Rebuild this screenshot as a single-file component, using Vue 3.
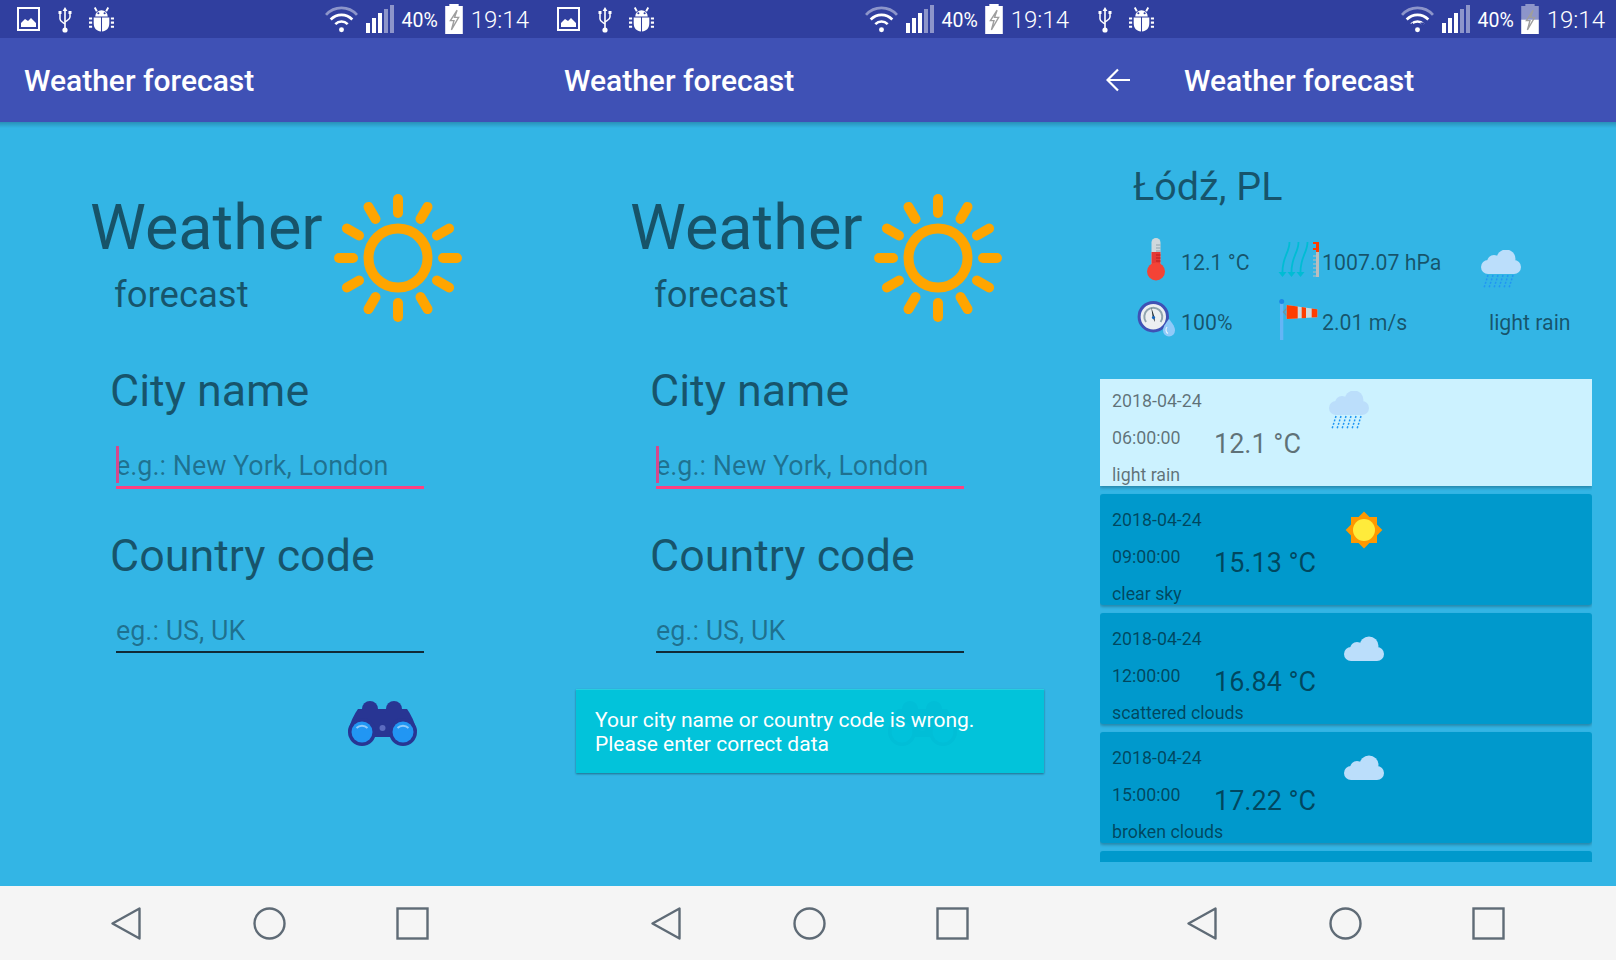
<script setup>
const phones = [
  { id: 1, screen: "form", showImage: true, toast: false },
  { id: 2, screen: "form", showImage: true, toast: true },
  { id: 3, screen: "details", showImage: false, toast: false },
];

const fields = [
  { label: "City name", placeholder: "e.g.: New York, London", active: true },
  { label: "Country code", placeholder: "eg.: US, UK", active: false },
];

const forecast = [
  { date: "2018-04-24", time: "06:00:00", temp: "12.1 °C", desc: "light rain", icon: "rain" },
  { date: "2018-04-24", time: "09:00:00", temp: "15.13 °C", desc: "clear sky", icon: "sun" },
  { date: "2018-04-24", time: "12:00:00", temp: "16.84 °C", desc: "scattered clouds", icon: "cloud" },
  { date: "2018-04-24", time: "15:00:00", temp: "17.22 °C", desc: "broken clouds", icon: "cloud" },
];

const rays = [0, 30, 60, 90, 120, 150, 180, 210, 240, 270, 300, 330];
const signal = [
  { x: 0, y: 18, h: 10, dim: false },
  { x: 6, y: 13, h: 15, dim: false },
  { x: 12, y: 8, h: 20, dim: false },
  { x: 18, y: 4, h: 24, dim: true },
  { x: 24, y: 0, h: 28, dim: true },
];
</script>

<template>
  <div class="screens">
    <svg class="defs" aria-hidden="true">
      <symbol id="cloud" viewBox="0 0 40 40">
        <g fill="#bbdefb">
          <circle cx="25" cy="17" r="9.5" />
          <circle cx="13" cy="20" r="7" />
          <rect x="0" y="18" width="40" height="14" rx="7" />
        </g>
      </symbol>
      <symbol id="rain" viewBox="0 0 40 40">
        <g fill="#bbdefb">
          <circle cx="25" cy="9" r="9.5" />
          <circle cx="13" cy="12" r="7" />
          <rect x="0" y="10" width="40" height="14" rx="7" />
        </g>
        <g stroke="#2196f3" stroke-width="1.5" stroke-dasharray="2 1.6" fill="none">
          <path d="M7 25 3 38M12 25 8 38M17 25 13 38M22 25 18 38M27 25 23 38M32 25 28 38" />
        </g>
      </symbol>
      <symbol id="sun" viewBox="0 0 40 40">
        <g fill="#ff9800">
          <rect x="7" y="7" width="26" height="26" />
          <rect x="7" y="7" width="26" height="26" transform="rotate(45 20 20)" />
        </g>
        <circle cx="20" cy="20" r="11" fill="#ffeb3b" />
      </symbol>
    </svg>

    <section v-for="phone in phones" :key="phone.id" class="phone">
      <div class="status" :class="{ 'status-short': !phone.showImage }">
        <div class="status-left">
          <svg v-if="phone.showImage" class="ic-image" viewBox="0 0 23 24">
            <path d="M1 1h21v22H1z" fill="none" stroke="#fff" stroke-width="2" />
            <path d="M4 20v-4l4-4 3 2 3-3 5 5v4z" fill="#fff" />
          </svg>
          <svg class="ic-usb" viewBox="0 0 14 27">
            <path d="M7 1 4.6 5h1.6v17h1.6V5h1.6z" fill="#fff" />
            <circle cx="7" cy="24" r="2.6" fill="#fff" />
            <path d="M2 7v6c0 2.400 2 3 5 5M12 7v4c0 2.400-2 3-5 5" fill="none" stroke="#fff" stroke-width="1.500" />
            <rect x="0.500" y="5" width="3" height="3" fill="#fff" />
            <rect x="10.500" y="5" width="3" height="3" fill="#fff" />
          </svg>
          <svg class="ic-bug" viewBox="0 0 24 24">
            <path d="M6 9a6 6 0 0 1 12 0z" fill="#fff" />
            <path d="M7.500 4 5.500 0.500M16.500 4l2-3.500" stroke="#fff" stroke-width="1.800" />
            <path d="M4.500 10h7v13.500c-4-.5-7-3-7-8zM12.500 10h7v5.500c0 5-3 7.500-7 8z" fill="#fff" />
            <path d="M0 10h3v2H0zM0 14h3v2H0zM0 18h3v2H0zM21 10h3v2h-3zM21 14h3v2h-3zM21 18h3v2h-3z" fill="#fff" />
            <circle cx="9" cy="6" r="1" fill="#303f9f" />
            <circle cx="15" cy="6" r="1" fill="#303f9f" />
          </svg>
        </div>
        <div class="status-right">
          <svg class="ic-wifi" viewBox="0 0 32 26">
            <path d="M1 8.500C9-.500 23-.500 31 8.500" fill="none" stroke="#fff" stroke-opacity=".45" stroke-width="2.600" />
            <path d="M5.500 13C11.500 7 20.500 7 26.500 13" fill="none" stroke="#fff" stroke-width="2.600" />
            <path d="M10 17.500c3.500-3.400 8.500-3.400 12 0" fill="none" stroke="#fff" stroke-width="2.600" />
            <circle cx="16" cy="23" r="2.400" fill="#fff" />
            <path v-if="!phone.showImage" d="M11 16l2.500 3h-5zM21 19l2.500-3h-5z" fill="#303f9f" />
          </svg>
          <svg class="ic-signal" viewBox="0 0 28 28">
            <rect
              v-for="bar in signal"
              :key="bar.x"
              :x="bar.x"
              :y="bar.y"
              width="4"
              :height="bar.h"
              fill="#fff"
              :fill-opacity="bar.dim ? 0.45 : 1"
            />
          </svg>
          <span class="percent">40%</span>
          <svg class="ic-battery" viewBox="0 0 17 29">
            <template v-if="phone.showImage">
              <path d="M4 0h9v2h4v27H0V2h4z" fill="#fff" />
            </template>
            <template v-else>
              <path d="M4 0h9v2h4v13H0V2h4z" fill="#fff" fill-opacity=".45" />
              <rect x="0" y="15" width="17" height="14" fill="#fff" />
            </template>
            <path d="M11.500 6 5 16h3.500L6 25 13 13H9z" fill="none" stroke="#9e9e9e" stroke-width="1.300" />
          </svg>
          <span class="clock">19:14</span>
        </div>
      </div>

      <header class="appbar">
        <svg v-if="phone.screen === 'details'" class="ic-back" viewBox="0 0 24 24">
          <path d="M24 12H2M12 1.500 1.500 12 12 22.500" fill="none" stroke="#fff" stroke-width="2.200" />
        </svg>
        <h1 class="appbar-title">Weather forecast</h1>
      </header>

      <main class="content">
        <div v-if="phone.screen === 'form'" class="form">
          <div class="brand">
            <div class="brand-text">
              <div class="brand-big">Weather</div>
              <div class="brand-small">forecast</div>
            </div>
            <svg class="brand-sun" viewBox="0 0 128 128">
              <circle cx="64" cy="64" r="29.500" fill="none" stroke="#ffa500" stroke-width="10" />
              <line
                v-for="angle in rays"
                :key="angle"
                x1="64"
                y1="5"
                x2="64"
                y2="19"
                stroke="#ffa500"
                stroke-width="10"
                stroke-linecap="round"
                :transform="`rotate(${angle} 64 64)`"
              />
            </svg>
          </div>

          <div v-for="field in fields" :key="field.label" class="field">
            <label class="field-label">{{ field.label }}</label>
            <div class="input-wrap">
              <input class="field-input" :class="{ active: field.active }" :placeholder="field.placeholder" readonly />
              <span v-if="field.active" class="caret"></span>
            </div>
          </div>

          <svg class="binoculars" viewBox="0 0 69 45">
            <g fill="#283593">
              <circle cx="22" cy="8" r="8" />
              <circle cx="46" cy="8" r="8" />
              <path d="M10 8Q4 16 0 30L14 36H55L69 30Q65 16 59 8z" />
              <circle cx="14" cy="31" r="14" />
              <circle cx="55" cy="31" r="14" />
            </g>
            <circle cx="14" cy="31" r="10.500" fill="#2196f3" />
            <circle cx="55" cy="31" r="10.500" fill="#2196f3" />
            <path d="M8.500 27c3-3 8-3 11 0M49.500 27c3-3 8-3 11 0" fill="none" stroke="#90caf9" stroke-width="2" />
            <circle cx="34.500" cy="27" r="3" fill="#5c6bc0" />
          </svg>

          <div v-if="phone.toast" class="toast">
            Your city name or country code is wrong.<br />Please enter correct data
          </div>
        </div>

        <div v-else class="details">
          <h2 class="city">Łódź, PL</h2>

          <div class="info">
            <div class="info-cell">
              <span class="info-icon">
                <svg class="ic-thermo" viewBox="0 0 20 43">
                  <rect x="5.500" y="0" width="9" height="30" rx="4.500" fill="#cfd8dc" />
                  <rect x="5.500" y="14" width="9" height="18" fill="#e53935" />
                  <circle cx="10" cy="33.500" r="9" fill="#f44336" />
                  <path d="M10 7h4.500M10 10h4.500M10 13h4.500" stroke="#90a4ae" />
                  <path d="M10 17h4.500M10 20h4.500M10 23h4.500" stroke="#b71c1c" />
                </svg>
              </span>
              <span class="info-text">12.1 °C</span>
            </div>
            <div class="info-cell">
              <span class="info-icon">
                <svg class="ic-press" viewBox="0 0 41 35">
                  <g fill="none" stroke="#00bcd4" stroke-width="1.800">
                    <path d="M11.500 0C11.500 11 4 15 4.500 31" />
                    <path d="M20.500 0C20.500 11 13 15 13.500 31" />
                    <path d="M29.500 0C29.500 11 22 15 22.500 31" />
                  </g>
                  <path d="M.5 30h8l-4 5zM9.500 30h8l-4 5zM18.500 30h8l-4 5z" fill="#00bcd4" />
                  <rect x="38" y="0" width="3" height="35" fill="#bdbdbd" />
                  <rect x="35" y="0" width="6" height="2" fill="#ff3d00" />
                  <rect x="38" y="0" width="3" height="10" fill="#ff3d00" />
                  <rect x="35" y="6" width="3" height="2" fill="#ff3d00" />
                  <path d="M35 14h3M35 18h3M35 22h3M35 26h3M35 30h3M35 34h3" stroke="#bdbdbd" />
                </svg>
              </span>
              <span class="info-text">1007.07 hPa</span>
            </div>
            <div class="info-cell info-cell-cloud">
              <svg class="ic-weather" viewBox="0 0 40 40"><use href="#rain" /></svg>
            </div>
            <div class="info-cell">
              <span class="info-icon">
                <svg class="ic-gauge" viewBox="0 0 40 40">
                  <circle cx="16.300" cy="16.700" r="14.200" fill="#eceff1" stroke="#3f51b5" stroke-width="3" />
                  <path d="M9 22a9 9 0 1 1 14.600 0" fill="none" stroke="#90a4ae" stroke-width="2" />
                  <path d="M14.200 7 15.800 18 18 22 17.500 17z" fill="#263238" />
                  <circle cx="16.500" cy="17.500" r="1.600" fill="#1565c0" />
                  <path d="M32 19c4 5 6 8 6 11.500a6 6 0 0 1-12 0C26 27 28 24 32 19z" fill="#90caf9" />
                  <path d="M30 27c-1.500 2-1.500 5 1 6.500" fill="none" stroke="#e3f2fd" stroke-width="1.200" />
                </svg>
              </span>
              <span class="info-text">100%</span>
            </div>
            <div class="info-cell">
              <span class="info-icon">
                <svg class="ic-sock" viewBox="0 0 40 41">
                  <rect x="2" y="2" width="3.300" height="39" fill="#64b5f6" />
                  <circle cx="3.700" cy="2.500" r="2.500" fill="#1e88e5" />
                  <path d="M9 9 5.500 13 9 17" fill="none" stroke="#78909c" stroke-width="1.200" />
                  <path d="M8.700 6 39.300 10.300V18.300L8.700 20z" fill="#cfd8dc" />
                  <path d="M8.700 6 19.700 7.500V19.400L8.700 20zM23.700 8.100 28 8.700V18.900L23.700 19.200zM33.700 9.500 39.300 10.300V18.300L33.700 18.600z" fill="#ff3d00" />
                </svg>
              </span>
              <span class="info-text">2.01 m/s</span>
            </div>
            <div class="info-cell info-cell-desc">
              <span class="info-text">light rain</span>
            </div>
          </div>

          <div class="list">
            <article v-for="(day, i) in forecast" :key="day.time" class="card" :class="{ selected: i === 0 }">
              <div class="card-left">
                <div>{{ day.date }}</div>
                <div>{{ day.time }}</div>
                <div>{{ day.desc }}</div>
              </div>
              <div class="card-temp">{{ day.temp }}</div>
              <svg class="card-icon" viewBox="0 0 40 40"><use :href="`#${day.icon}`" /></svg>
            </article>
            <div class="card"></div>
          </div>
        </div>
      </main>

      <nav class="navbar">
        <svg class="nav-icon" viewBox="0 0 33 33">
          <path d="M29.500 1.500V31.500L2.500 16.500z" fill="none" stroke="#5f6b76" stroke-width="2.400" stroke-linejoin="round" />
        </svg>
        <svg class="nav-icon" viewBox="0 0 33 33">
          <circle cx="16.500" cy="16.500" r="15" fill="none" stroke="#5f6b76" stroke-width="2.400" />
        </svg>
        <svg class="nav-icon" viewBox="0 0 33 33">
          <rect x="1.500" y="1.500" width="30" height="30" fill="none" stroke="#5f6b76" stroke-width="2.400" />
        </svg>
      </nav>
    </section>
  </div>
</template>

<style>
html,
body {
  margin: 0;
  overflow: hidden;
}
</style>

<style scoped>
.screens {
  display: flex;
  width: 1616px;
  height: 960px;
  overflow: hidden;
  font-family: Roboto, "Liberation Sans", sans-serif;
}

.defs {
  display: none;
}

.phone {
  flex: 0 0 540px;
  height: 960px;
  display: flex;
  flex-direction: column;
  overflow: hidden;
  isolation: isolate;
  background: #33b5e5;
}

.phone:nth-of-type(3) {
  margin-left: -4px;
}

.status {
  height: 38px;
  flex: none;
  display: flex;
  align-items: center;
  justify-content: space-between;
  padding: 0 11px 0 17px;
  background: #303f9f;
  color: #fff;
}

.status-short {
  padding-left: 22px;
}

.status-left,
.status-right {
  display: flex;
  align-items: center;
}

.ic-image {
  width: 23px;
  height: 24px;
  margin-right: 18px;
}

.ic-usb {
  width: 14px;
  height: 27px;
  margin-right: 17px;
}

.ic-bug {
  width: 25px;
  height: 25px;
}

.ic-wifi {
  width: 33px;
  height: 27px;
  margin-right: 8px;
}

.ic-signal {
  width: 28px;
  height: 28px;
  margin-right: 8px;
}

.percent {
  font-size: 19.500px;
  margin: 2px 7px 0 0;
}

.ic-battery {
  width: 18px;
  height: 30px;
  margin-right: 8px;
}

.clock {
  font-size: 24px;
  font-weight: 300;
  margin-top: 2px;
}

.appbar {
  height: 84px;
  flex: none;
  display: flex;
  align-items: center;
  padding-left: 24px;
  background: #3f51b5;
  position: relative;
  z-index: 1;
}

.appbar::after {
  content: "";
  position: absolute;
  left: 0;
  right: 0;
  top: 100%;
  height: 6px;
  background: linear-gradient(rgba(0, 0, 0, 0.2), rgba(0, 0, 0, 0));
}

.ic-back {
  width: 24px;
  height: 24px;
  margin: 0 54px 0 6px;
}

.appbar-title {
  margin: 0;
  font-size: 30px;
  font-weight: 500;
  color: #fff;
}

.content {
  flex: 1;
  min-height: 0;
}

.form {
  position: relative;
  padding: 70px 0 0 90px;
  height: 100%;
  box-sizing: border-box;
  color: rgba(0, 0, 0, 0.54);
}

.brand {
  display: flex;
  align-items: flex-start;
  height: 132px;
  margin-bottom: 41px;
}

.brand-text {
  margin-top: 1px;
}

.brand-big {
  font-size: 63px;
  line-height: 70px;
  width: 244px;
}

.brand-small {
  font-size: 36.500px;
  line-height: 44px;
  margin: 10px 0 0 24px;
}

.brand-sun {
  width: 128px;
  height: 128px;
  margin-top: 2px;
}

.field {
  height: 165px;
  margin-left: 20px;
}

.field-label {
  display: block;
  font-size: 44.800px;
  line-height: 52px;
}

.input-wrap {
  position: relative;
  width: 308px;
  margin: 21px 0 0 6px;
}

.field-input {
  display: block;
  width: 100%;
  height: 50px;
  box-sizing: border-box;
  padding: 8px 0 0;
  border: 0;
  border-bottom: 2px solid #102a36;
  outline: none;
  background: transparent;
  font: 26.900px Roboto, sans-serif;
  color: #000;
}

.field-input.active {
  height: 51px;
  border-bottom: 3px solid #ff4081;
}

.field-input::placeholder {
  color: rgba(0, 0, 0, 0.38);
  opacity: 1;
}

.caret {
  position: absolute;
  left: 0;
  top: 8px;
  width: 3px;
  height: 37px;
  background: #d6488c;
}

.binoculars {
  display: block;
  width: 69px;
  height: 45px;
  margin: 6px 0 0 258px;
}

.toast {
  position: absolute;
  left: 36px;
  top: 567px;
  width: 468px;
  height: 84px;
  box-sizing: border-box;
  padding: 18px 19px;
  background: rgba(0, 196, 218, 0.96);
  border-top: 1px solid #26cfe0;
  box-shadow: 0 1px 2px rgba(0, 0, 0, 0.4);
  color: #fff;
  font-size: 21px;
  line-height: 24px;
}

.details {
  padding: 43px 0 0 24px;
}

.city {
  margin: 0 0 0 33px;
  font-size: 39.500px;
  line-height: 44px;
  font-weight: 400;
  color: rgba(0, 0, 0, 0.54);
}

.info {
  display: grid;
  grid-template-columns: 141px 203px 1fr;
  grid-auto-rows: 60px;
  margin: 23px 0 27px 37px;
  color: rgba(0, 0, 0, 0.54);
}

.info-cell {
  display: flex;
  align-items: center;
}

.info-cell-cloud {
  align-items: flex-start;
  padding-top: 18px;
}

.info-cell-desc {
  padding-left: 8px;
}

.info-icon {
  width: 44px;
  flex: none;
  display: flex;
}

.info-text {
  font-size: 21.300px;
  white-space: nowrap;
}

.ic-thermo {
  width: 20px;
  height: 43px;
  margin: 0 0 6px 9px;
}

.ic-press {
  width: 41px;
  height: 35px;
  margin-bottom: 6px;
}

.ic-weather {
  width: 40px;
  height: 40px;
}

.ic-gauge {
  width: 40px;
  height: 40px;
  margin-bottom: 4px;
}

.ic-sock {
  width: 40px;
  height: 41px;
  margin-bottom: 5px;
}

.list {
  width: 492px;
  height: 483px;
  overflow: hidden;
}

.card {
  display: flex;
  align-items: flex-start;
  height: 111px;
  box-sizing: border-box;
  padding: 6.500px 0 0 12px;
  margin-bottom: 8px;
  overflow: hidden;
  background: #0099cc;
  border-radius: 3px;
  box-shadow: 0 2px 3px rgba(0, 0, 0, 0.25);
  color: rgba(0, 0, 0, 0.54);
}

.card.selected {
  height: 107px;
  padding-top: 2.500px;
  background: #ccf2ff;
  border-radius: 0;
}

.card-left {
  width: 102px;
  flex: none;
  font-size: 17.800px;
  line-height: 37px;
  white-space: nowrap;
}

.card-temp {
  font-size: 27px;
  line-height: 32px;
  margin: 46px 28px 0 0;
  white-space: nowrap;
}

.card-icon {
  width: 40px;
  height: 40px;
  margin-top: 9.500px;
}

.navbar {
  height: 74px;
  flex: none;
  display: flex;
  align-items: center;
  justify-content: center;
  gap: 110px;
  padding-right: 2px;
  background: #f5f5f5;
}

.nav-icon {
  width: 33px;
  height: 33px;
}
</style>
